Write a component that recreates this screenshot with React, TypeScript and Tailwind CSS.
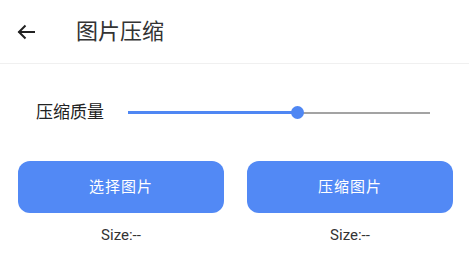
const font = { fontFamily: '"Roboto", "Noto Sans CJK SC", sans-serif' };

export default function App() {
  const value = 56;
  return (
    <div className="w-[469px] h-[257px] bg-white text-[#212121] overflow-hidden" style={font}>
      {/* Header */}
      <div className="h-[64px] flex items-center border-b border-[#f0f0f0]">
        <button className="ml-[14px] w-6 h-6 flex items-center justify-center text-[#222]">
          <svg width="24" height="24" viewBox="0 0 24 24" fill="none" stroke="currentColor" strokeWidth="2" strokeLinecap="square">
            <path d="M20 12H5.5" />
            <path d="M11.5 5.5L5 12l6.5 6.5" strokeLinecap="butt" />
          </svg>
        </button>
        <h1 className="ml-[38px] text-[22px] text-[#333] leading-none">图片压缩</h1>
      </div>

      {/* Slider */}
      <div className="h-[97px] flex items-center pl-[36px] pr-[39px]">
        <span className="text-[17px] text-[#222] w-[92px]">压缩质量</span>
        <div className="relative flex-1 h-[14px] flex items-center">
          <div className="w-full h-[2px] bg-[#a3a3a3]" />
          <div className="absolute left-0 h-[3px] bg-[#4f87f3]" style={{ width: `${value}%` }} />
          <div
            className="absolute w-[13px] h-[13px] -ml-[6.5px] rounded-full bg-[#4f87f3]"
            style={{ left: `${value}%` }}
          />
        </div>
      </div>

      {/* Buttons */}
      <div className="flex pl-[18px] gap-[23px]">
        {["选择图片", "压缩图片"].map((t) => (
          <div key={t} className="w-[206px] flex flex-col items-center">
            <button className="w-full h-[52px] rounded-[12px] bg-[#5289f5] text-white text-[15px] tracking-[1px]">
              {t}
            </button>
            <span className="mt-[12px] text-[15px] leading-[20px] text-[#333]">Size:--</span>
          </div>
        ))}
      </div>
    </div>
  );
}
